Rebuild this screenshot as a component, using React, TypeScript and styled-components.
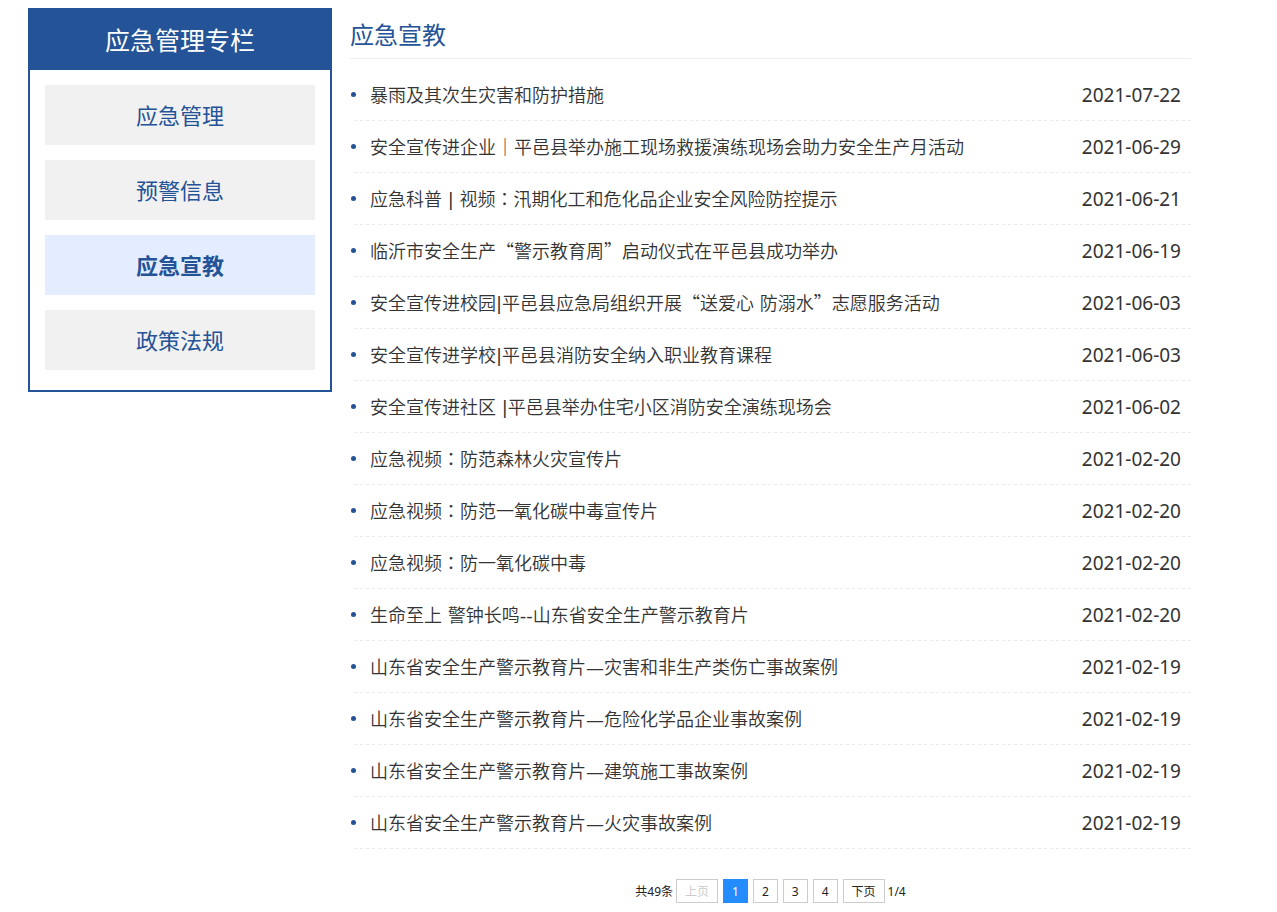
import React from "react";
import styled, { createGlobalStyle } from "styled-components";

const blue = "#245397";
const latin = '"Noto Sans", "Open Sans"';
const cjk = '"Noto Sans CJK SC", sans-serif';

const GlobalStyle = createGlobalStyle`
  * { box-sizing: border-box; }
  body {
    margin: 0;
    background: #fff;
    color: #333;
    font-family: ${cjk};
  }
  a { color: inherit; text-decoration: none; }
  ul { list-style: none; margin: 0; padding: 0; }
`;

const Page = styled.div`
  display: flex;
  align-items: flex-start;
  gap: 18px;
  max-width: 1277px;
  margin: 0 auto;
  padding: 8px 86px 8px 28px;
`;

const Sidebar = styled.aside`
  flex: 0 0 304px;
  border: 2px solid ${blue};
`;

const SidebarTitle = styled.h2`
  margin: 0;
  padding-bottom: 2px;
  background: ${blue};
  color: #fff;
  font-size: 25px;
  font-weight: 400;
  line-height: 58px;
  text-align: center;
`;

const Menu = styled.ul`
  display: flex;
  flex-direction: column;
  gap: 15px;
  && { padding: 15px 15px 20px; }
`;

const MenuLink = styled.a<{ $active?: boolean }>`
  display: block;
  padding-bottom: 2px;
  background: ${(p) => (p.$active ? "#e3edff" : "#f1f1f1")};
  color: ${blue};
  font-size: 22px;
  font-weight: ${(p) => (p.$active ? 700 : 400)};
  line-height: 58px;
  text-align: center;
`;

const Content = styled.main`
  flex: 1;
  min-width: 0;
`;

const Heading = styled.h1`
  margin: 0 0 10px;
  padding-top: 2px;
  border-bottom: 1px solid #eee;
  color: ${blue};
  font-size: 24px;
  font-weight: 400;
  line-height: 48px;
`;

const Row = styled.li`
  display: flex;
  align-items: center;
  min-height: 52px;
  margin-left: 4px;
  padding: 0 10px 1px 0;
  background: repeating-linear-gradient(90deg, #e9e9e9 0 3px, transparent 3px 6px)
    left bottom / 100% 1px no-repeat;

  &::before {
    content: "";
    flex: none;
    width: 5px;
    height: 5px;
    margin: 0 14px 0 -3px;
    border-radius: 50%;
    background: ${blue};
  }
`;

const RowLink = styled.a`
  flex: 1;
  min-width: 0;
  padding-bottom: 2px;
  font-size: 18px;
  font-weight: 350;
  line-height: 26px;
`;

const Colon = styled.span`
  font-family: "Noto Sans CJK TC", sans-serif;
`;

const Mark = styled.span`
  font-family: "DejaVu Sans", sans-serif;
  font-weight: 400;
  line-height: 1;
`;

const RowDate = styled.time`
  flex: none;
  font-family: ${latin}, sans-serif;
  font-size: 19px;
  line-height: 26px;
`;

const Pager = styled.nav`
  display: flex;
  justify-content: center;
  align-items: center;
  gap: 5px;
  margin-top: 30px;
  color: #222;
  font-family: ${latin}, ${cjk};
  font-size: 12px;
  line-height: 22px;
`;

const PagerText = styled.span<{ $side: "left" | "right" }>`
  padding-top: 2px;
  margin-${(p) => p.$side}: -2px;
`;

const PageButton = styled.button<{ $current?: boolean }>`
  height: 24px;
  padding: 1px 8px 0;
  border: 1px solid ${(p) => (p.$current ? "#258cff" : "#ccc")};
  background: ${(p) => (p.$current ? "#258cff" : "#fff")};
  color: ${(p) => (p.$current ? "#fff" : "#222")};
  font: inherit;
  cursor: pointer;

  &:disabled {
    color: #ccc;
    cursor: default;
  }
`;

const menu = ["应急管理", "预警信息", "应急宣教", "政策法规"];

const articles: [string, string][] = [
  ["暴雨及其次生灾害和防护措施", "2021-07-22"],
  ["安全宣传进企业｜平邑县举办施工现场救援演练现场会助力安全生产月活动", "2021-06-29"],
  ["应急科普 | 视频：汛期化工和危化品企业安全风险防控提示", "2021-06-21"],
  ["临沂市安全生产“警示教育周”启动仪式在平邑县成功举办", "2021-06-19"],
  ["安全宣传进校园|平邑县应急局组织开展“送爱心 防溺水”志愿服务活动", "2021-06-03"],
  ["安全宣传进学校|平邑县消防安全纳入职业教育课程", "2021-06-03"],
  ["安全宣传进社区 |平邑县举办住宅小区消防安全演练现场会", "2021-06-02"],
  ["应急视频：防范森林火灾宣传片", "2021-02-20"],
  ["应急视频：防范一氧化碳中毒宣传片", "2021-02-20"],
  ["应急视频：防一氧化碳中毒", "2021-02-20"],
  ["生命至上 警钟长鸣--山东省安全生产警示教育片", "2021-02-20"],
  ["山东省安全生产警示教育片—灾害和非生产类伤亡事故案例", "2021-02-19"],
  ["山东省安全生产警示教育片—危险化学品企业事故案例", "2021-02-19"],
  ["山东省安全生产警示教育片—建筑施工事故案例", "2021-02-19"],
  ["山东省安全生产警示教育片—火灾事故案例", "2021-02-19"],
];

// Sets colons in a face that centres them, and western marks in a western face.
function Title({ text }: { text: string }) {
  return (
    <>
      {text.split(/(：|[ |—-]+)/).map((part, i) => {
        if (i % 2 === 0) return part;
        if (part === "：") return <Colon key={i} lang="zh-TW">{part}</Colon>;
        return <Mark key={i}>{part}</Mark>;
      })}
    </>
  );
}

export default function App() {
  return (
    <>
      <GlobalStyle />
      <Page lang="zh-CN">
        <Sidebar>
          <SidebarTitle>应急管理专栏</SidebarTitle>
          <Menu>
            {menu.map((name) => (
              <li key={name}>
                <MenuLink href="#" $active={name === "应急宣教"}>
                  {name}
                </MenuLink>
              </li>
            ))}
          </Menu>
        </Sidebar>
        <Content>
          <Heading>应急宣教</Heading>
          <ul>
            {articles.map(([title, date]) => (
              <Row key={title}>
                <RowLink href="#">
                  <Title text={title} />
                </RowLink>
                <RowDate dateTime={date}>{date}</RowDate>
              </Row>
            ))}
          </ul>
          <Pager>
            <PagerText $side="right">共49条</PagerText>
            <PageButton disabled>上页</PageButton>
            <PageButton $current>1</PageButton>
            <PageButton>2</PageButton>
            <PageButton>3</PageButton>
            <PageButton>4</PageButton>
            <PageButton>下页</PageButton>
            <PagerText $side="left">1/4</PagerText>
          </Pager>
        </Content>
      </Page>
    </>
  );
}
